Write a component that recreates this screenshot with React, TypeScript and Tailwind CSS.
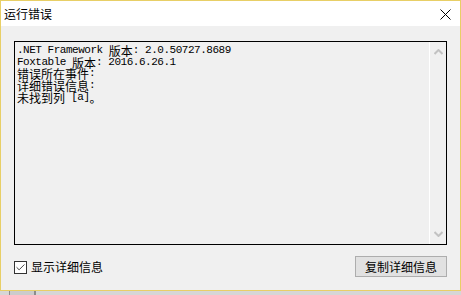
import { Check } from 'lucide-react'

const cjk = 'text-[12px] tracking-normal [font-family:"Noto_Sans_CJK_SC",sans-serif]'
const mono = 'text-[11px] tracking-[-0.48px] [font-family:"Liberation_Mono",monospace]'

function Line({ parts }: { parts: [string, boolean][] }) {
  return (
    <div className="h-[11.7px] leading-[11.7px] whitespace-pre flex items-center">
      {parts.map(([t, isCjk], i) => (
        <span key={i} className={isCjk ? cjk : mono}>
          {t}
        </span>
      ))}
    </div>
  )
}

export default function App() {
  return (
    <div className="w-[461px] h-[295px] flex flex-col bg-[#d6d6d6] [font-family:'Noto_Sans_CJK_SC',sans-serif] text-black">
      <div className="w-[461px] h-[291px] border border-[#e8cf66] flex flex-col bg-[#f0f0f0]">
        {/* title bar */}
        <div className="h-[25px] bg-white flex items-center justify-between pl-[3px] pr-[9px]">
          <span className="text-[12px] leading-none">运行错误</span>
          <svg width="11" height="11" viewBox="0 0 11 11" className="mt-[1px]">
            <path d="M0.5 0.5 L10.5 10.5 M10.5 0.5 L0.5 10.5" stroke="#000" strokeWidth="1" />
          </svg>
        </div>

        {/* body */}
        <div className="flex-1 flex flex-col px-[13px] pt-[15px]">
          <div className="h-[204px] border border-black flex">
            <div className="flex-1 pl-[2px] pt-[3px] flex flex-col">
              <Line parts={[['.NET Framework ', false], ['版本', true], [': 2.0.50727.8689', false]]} />
              <Line parts={[['Foxtable ', false], ['版本', true], [': 2016.6.26.1', false]]} />
              <Line parts={[['错误所在事件', true], [':', false]]} />
              <Line parts={[['详细错误信息', true], [':', false]]} />
              <Line parts={[['未找到列', true], [' [a]', false], ['。', true]]} />
            </div>
            <div className="w-[17px] border-l border-white flex flex-col items-center justify-between pt-[7px] pb-[7px]">
              <svg width="9" height="6" viewBox="0 0 9 6">
                <path d="M0.5 5 L4.5 1 L8.5 5" stroke="#c2c2c2" strokeWidth="2" fill="none" />
              </svg>
              <svg width="9" height="6" viewBox="0 0 9 6">
                <path d="M0.5 1 L4.5 5 L8.5 1" stroke="#c2c2c2" strokeWidth="2" fill="none" />
              </svg>
            </div>
          </div>

          <div className="mt-[11px] h-[21px] flex items-center justify-between">
            <label className="flex items-center gap-[4px] pt-[1px]">
              <span className="w-[13px] h-[13px] border border-[#333] bg-white flex items-center justify-center">
                <Check size={11} strokeWidth={2} className="text-[#333]" />
              </span>
              <span className="text-[12px] leading-none">显示详细信息</span>
            </label>
            <button className="w-[92px] h-[21px] border border-[#adadad] bg-[#e1e1e1] text-[12px] leading-none flex items-center justify-center">
              复制详细信息
            </button>
          </div>
        </div>
      </div>

      {/* window behind */}
      <div className="h-[4px] flex">
        <div className="w-[9px]" />
        <div className="w-[1px] bg-[#8c8c8c]" />
        <div className="w-[24px] bg-[#cccccc]" />
        <div className="w-[2px] bg-[#8c8c8c]" />
      </div>
    </div>
  )
}
